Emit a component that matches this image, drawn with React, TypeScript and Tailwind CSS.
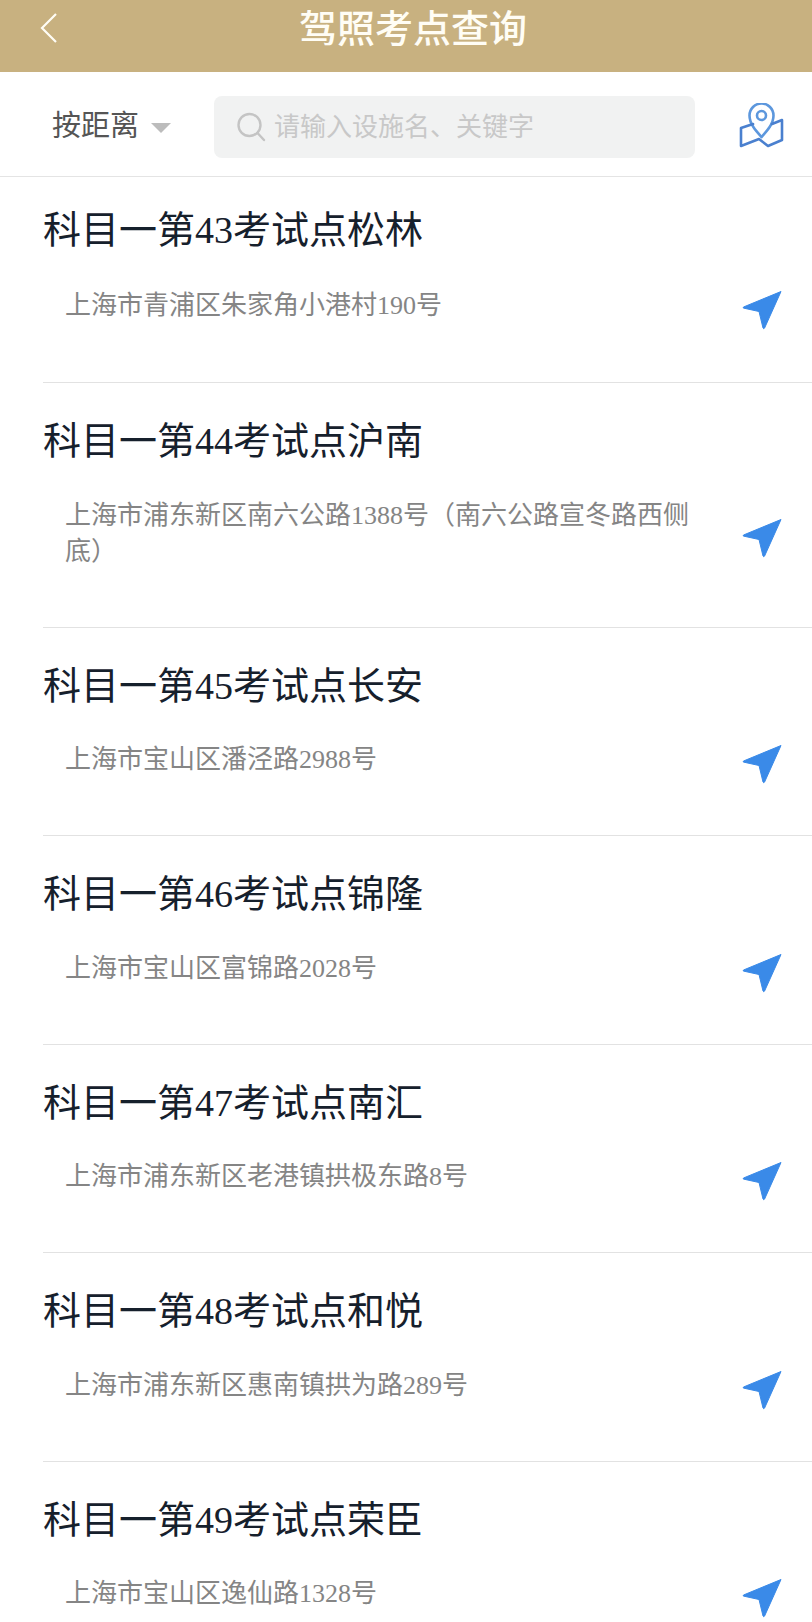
const SANS = "font-['Liberation_Serif','Noto_Sans_CJK_SC',sans-serif]";

const SITES = [
  { name: "科目一第43考试点松林", addr: "上海市青浦区朱家角小港村190号" },
  { name: "科目一第44考试点沪南", addr: "上海市浦东新区南六公路1388号（南六公路宣冬路西侧底）" },
  { name: "科目一第45考试点长安", addr: "上海市宝山区潘泾路2988号" },
  { name: "科目一第46考试点锦隆", addr: "上海市宝山区富锦路2028号" },
  { name: "科目一第47考试点南汇", addr: "上海市浦东新区老港镇拱极东路8号" },
  { name: "科目一第48考试点和悦", addr: "上海市浦东新区惠南镇拱为路289号" },
  { name: "科目一第49考试点荣臣", addr: "上海市宝山区逸仙路1328号" },
];

function NavArrow() {
  return (
    <svg width="40" height="40" viewBox="0 0 40 40" className="shrink-0">
      <path
        d="M39 1.5 L1.5 17 Q0.5 18 2 18.2 L17 21.5 L21 38 Q21.8 39.5 22.6 38 Z"
        fill="#3a8ae8"
        stroke="#3a8ae8"
        strokeWidth="1"
        strokeLinejoin="round"
      />
    </svg>
  );
}

function MapPin() {
  return (
    <svg width="47" height="46" viewBox="0 0 47 46" fill="none" stroke="#5c97dd" strokeWidth="2.6" strokeLinejoin="round" strokeLinecap="round">
      <path d="M22.500 34 C17 28 10.500 21 10.500 12.500 A12 12 0 0 1 34.500 12.500 C34.500 21 28 28 22.500 34 Z" />
      <circle cx="22.500" cy="12.500" r="4.500" />
      <path d="M14 21 L2 25 L2 43 L20 36 L29 43 L43 37 L43 17 L33 21" stroke="#4a80cf" />
    </svg>
  );
}

export default function App() {
  return (
    <div className={`h-[1622px] w-[812px] overflow-hidden bg-white ${SANS}`}>
      <header className="relative flex h-[72px] items-start justify-center bg-[#c8b180] pt-[6px] pl-[14px]">
        <svg width="20" height="32" viewBox="0 0 20 32" fill="none" stroke="#fffdf5" strokeWidth="2.2" className="absolute left-[39px] top-[12px]">
          <path d="M17 2 L3 16 L17 30" />
        </svg>
        <h1 className="text-[38px] leading-[46px] font-medium text-[#fffdf5]">驾照考点查询</h1>
      </header>

      <div className="flex h-[105px] items-center border-b border-[#e4e4e4] pt-[6px] pl-[52px]">
        <button type="button" className="flex w-[162px] items-center text-[29px] text-[#555555]">
          按距离
          <span className="ml-[12px] mt-[2px] h-0 w-0 border-x-[10px] border-t-[10px] border-x-transparent border-t-[#bcbcbc]" />
        </button>
        <div className="flex h-[62px] w-[481px] items-center rounded-[8px] bg-[#f1f2f2] pl-[22px]">
          <svg width="30" height="30" viewBox="0 0 30 30" fill="none" stroke="#c4c4c4" strokeWidth="2.4" strokeLinecap="round">
            <circle cx="13.500" cy="13" r="11" />
            <path d="M21.500 21 L28 28" />
          </svg>
          <span className="ml-[8px] text-[26px] text-[#c8c8c8]">请输入设施名、关键字</span>
        </div>
        <div className="ml-[44px] -mt-[3px]">
          <MapPin />
        </div>
      </div>

      <ul>
        {SITES.map((s, i) => (
          <li
            key={s.name}
            className={`ml-[43px] border-b border-[#e2e2e2] ${i === 0 ? "pt-[30px] pb-[58px]" : "pt-[35px] pb-[57px]"}`}
          >
            <div className="text-[38px] leading-[46px] text-[#16202c]">{s.name}</div>
            <div className={`flex items-center ${i === 0 ? "mt-[35px]" : "mt-[33.5px]"}`}>
              <p className="ml-[22px] w-[630px] text-[26px] leading-[36px] text-[#858585]">{s.addr}</p>
              <span className="ml-[47px] -my-[2px] translate-y-[4px]">
                <NavArrow />
              </span>
            </div>
          </li>
        ))}
      </ul>
    </div>
  );
}
